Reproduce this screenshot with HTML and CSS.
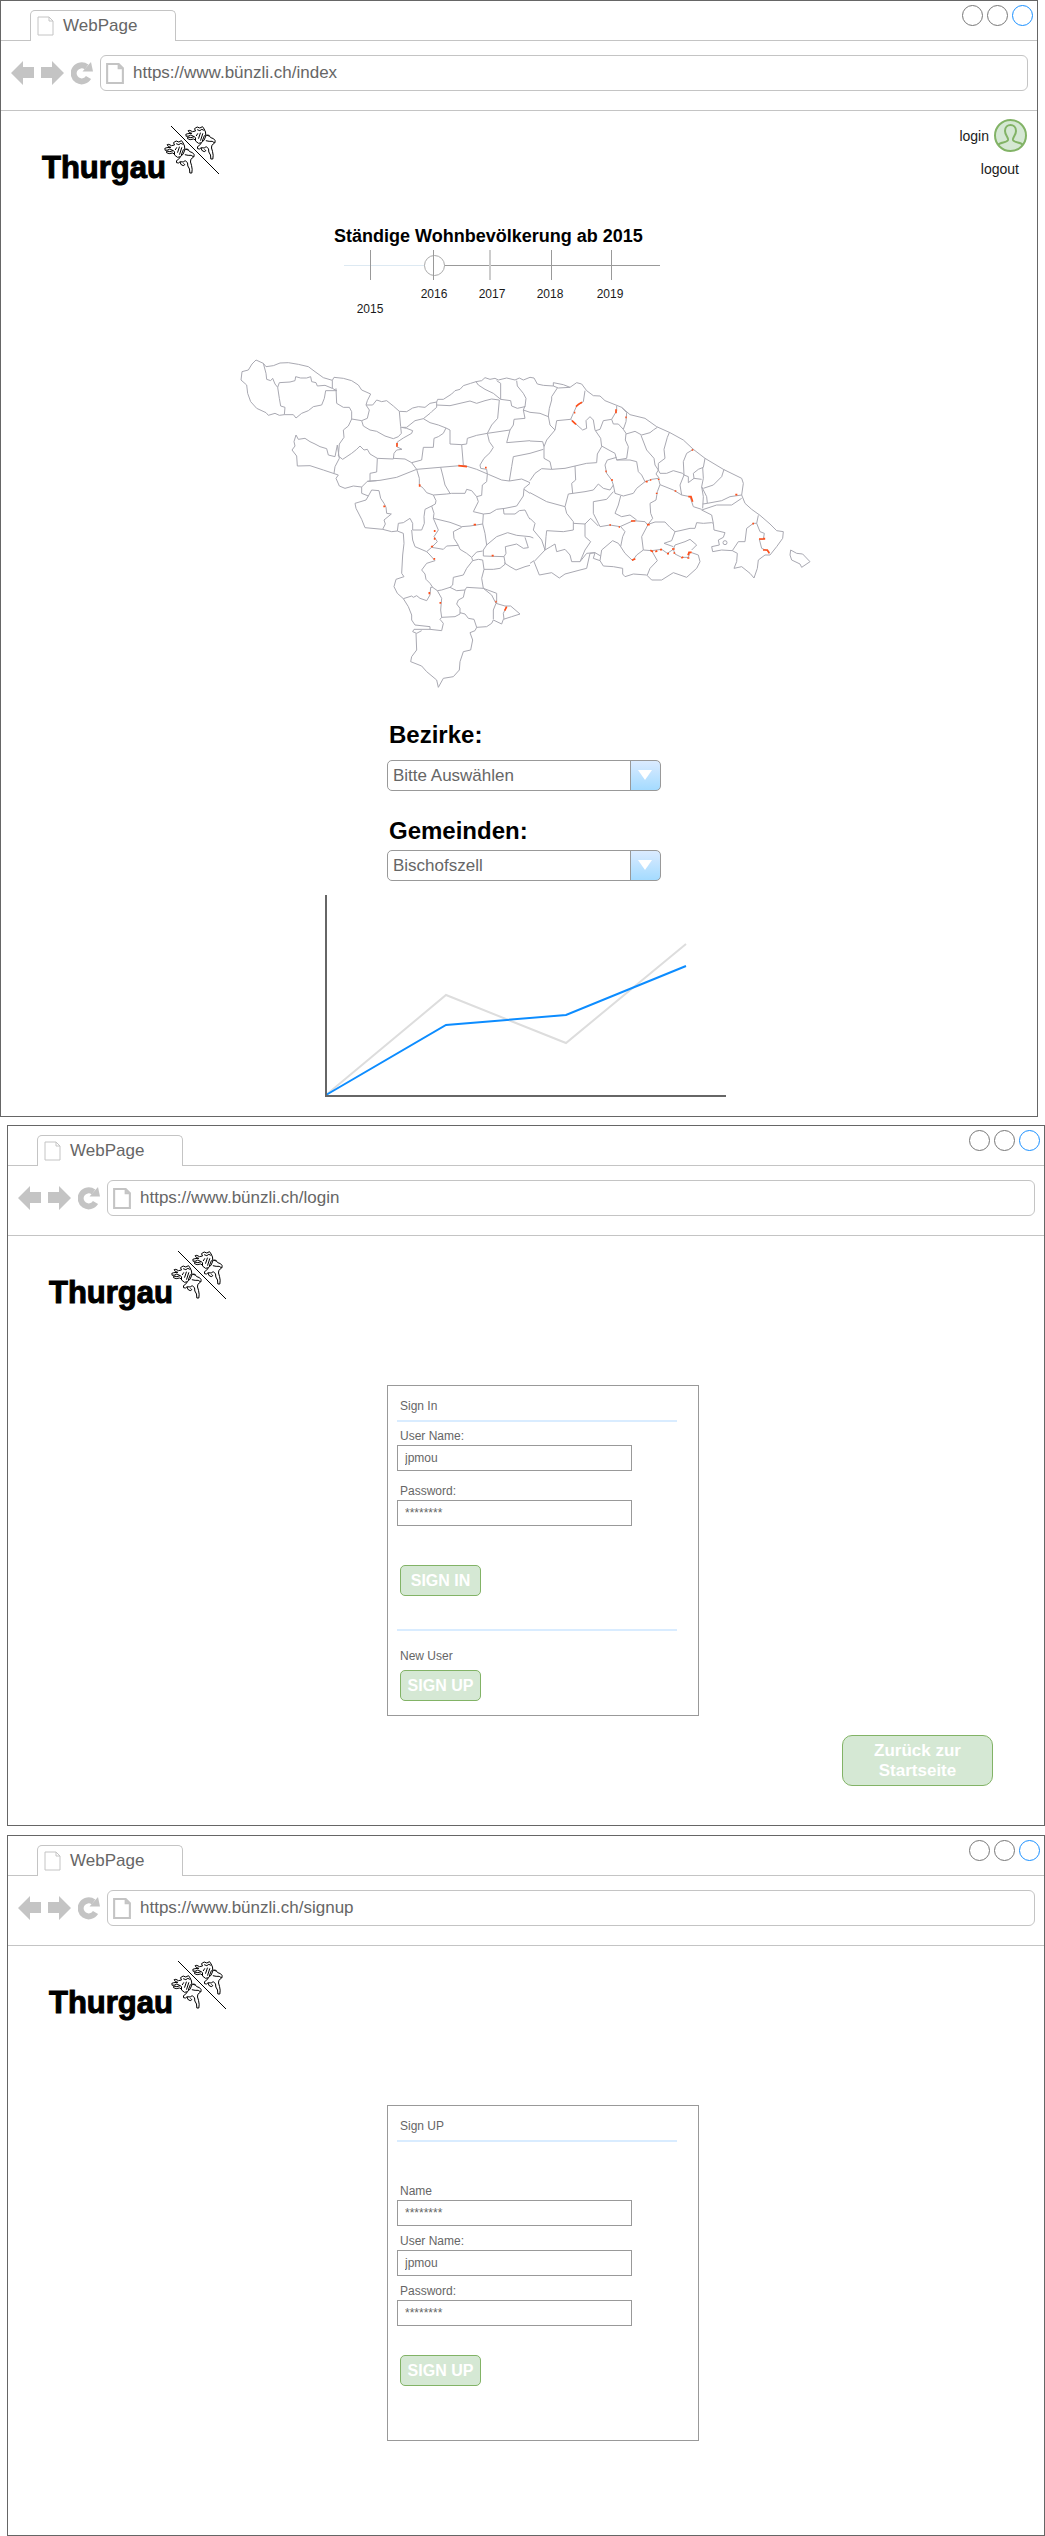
FILE: index.html
```html
<!DOCTYPE html>
<html lang="de">
<head>
<meta charset="utf-8">
<meta name="viewport" content="width=device-width, initial-scale=1">
<title>Thurgau</title>
<link rel="stylesheet" href="styles.css">
</head>
<body>

<!-- Shared icons -->
<svg class="sprite" aria-hidden="true">
  <symbol id="i-page" viewBox="0 0 17 20">
    <path d="M1 1H12L16 5V19H1ZM12 1V5H16" fill="none" stroke="currentColor"/>
  </symbol>
  <symbol id="i-back" viewBox="0 0 23 26">
    <path d="M0 13L12 1V7H23V18H12V25Z" fill="currentColor"/>
  </symbol>
  <symbol id="i-forward" viewBox="0 0 23 26">
    <path d="M23 13L11 1V7H0V18H11V25Z" fill="currentColor"/>
  </symbol>
  <symbol id="i-reload" viewBox="0 0 22 26">
    <path d="M17.5 17.5A8 8 0 1 1 15.5 7" fill="none" stroke="currentColor" stroke-width="6"/>
    <path d="M11.500 11.500L20 2L22 11.500Z" fill="currentColor"/>
  </symbol>
  <symbol id="i-lion" viewBox="0 0 92 102" overflow="visible">
    <path d="M28 8L36 3L44 6L52 2L57 9L61 18L62 30L57 42L49 50L40 52L31 45L31 35L27 32
      M28 8L31 15L22 17L14 13L9 14L13 20L20 22L8 23L2 25L3 31L11 30L17 27L27 32L17 35L8 33L7 38L15 41L25 39L31 42
      M36 11L44 14L50 10L56 13M38 22L33 30M46 20L40 38M53 22L46 44M58 28L51 46
      M62 28L70 27L74 31M62 44L72 46L81 46L89 51L90 44L85 38L77 35L72 30L66 28
      M49 50L43 58L37 62L37 68L43 69L48 65L57 66L63 62L70 68L71 78L76 87L77 99L83 99L84 88L82 76L79 66L80 58L88 51
      M48 66L50 73L57 77L62 74L58 70"/>
  </symbol>
  <symbol id="i-logo" viewBox="0 0 55 52" overflow="visible">
    <g fill="none" stroke="#000">
      <path d="M5 3L53 51"/>
      <use href="#i-lion" x="-2" y="17" width="31" height="34" stroke-width="3"/>
      <use href="#i-lion" x="19" y="3" width="31" height="34" stroke-width="3"/>
    </g>
  </symbol>
</svg>

<section class="window window-index">
  <header class="tabbar">
    <div class="tab"><svg class="tab-icon"><use href="#i-page"/></svg>WebPage</div>
    <div class="controls"><i></i><i></i><i class="active"></i></div>
  </header>
  <div class="toolbar">
    <svg class="nav-icon"><use href="#i-back"/></svg>
    <svg class="nav-icon"><use href="#i-forward"/></svg>
    <svg class="nav-icon reload"><use href="#i-reload"/></svg>
    <div class="address"><svg class="address-icon"><use href="#i-page"/></svg><input type="text" aria-label="Adresse" value="https://www.bünzli.ch/index"></div>
  </div>
  <div class="site-head">
    <div class="logo"><span>Thurgau</span><svg><use href="#i-logo"/></svg></div>
    <nav class="account">
      <a class="login" href="#login">login
        <svg viewBox="0 0 33 33" fill="none" stroke="#82b366" stroke-width="2">
          <circle cx="16.500" cy="16.500" r="15.500" fill="#d5e8d4"/>
          <path d="M4 26C6 23 13 24 14 21C14.500 18 11 16 11 12C11 4 22 4 22 12C22 16 18.500 18 19 21C20 24 27 23 29 26"/>
        </svg>
      </a>
      <a class="logout" href="#logout">logout</a>
    </nav>
  </div>

  <main class="stage">
    <div class="timeline">
      <h1><label for="year">Ständige Wohnbevölkerung ab 2015</label></h1>
      <div class="slider">
        <input id="year" type="range" min="0" max="100" value="27" aria-valuetext="2016">
        <svg viewBox="0 0 318 70">
          <path d="M26.500 0V30M89.500 0V30M207.500 0V30M267.500 0V30" stroke="#999"/>
          <path d="M146 0V30" stroke="#ccc" stroke-width="2"/>
          <g text-anchor="middle">
            <text x="26" y="63">2015</text>
            <text x="90" y="48">2016</text>
            <text x="148" y="48">2017</text>
            <text x="206" y="48">2018</text>
            <text x="266" y="48">2019</text>
          </g>
        </svg>
      </div>
    </div>

    <svg class="map" viewBox="0 0 1800 1050" role="img" aria-label="Gemeinden im Kanton Thurgau">
      <g class="borders">
        <path d="M78 30L66 42 55 60 36 65 33 90 50 105 53 130 62 155 80 175 108 188 115 196 135 190 148 196 163 194 190 194 198 204 215 190 235 182 250 170 275 165 283 145 287 122 320 122"/>
        <path d="M78 30L100 40 108 50 130 47 150 39 175 38 205 43 235 50 255 65 280 83 307 91 307 115 320 122"/>
        <path d="M100 40L108 70 110 88 122 92 128 85 135 102 143 112 148 145 152 168 165 172 163 194M143 112L148 98 180 96 195 92 197 80 212 84 230 84 242 80 245 95 258 98 262 108 285 106 307 115"/>
        <path d="M307 91L312 82 340 85 365 92 385 105 395 120 422 132 412 152 408 165 418 180 412 205 395 212 365 207 365 185 358 172 340 172 320 160 318 115"/>
        <path d="M408 165L428 165 440 150 455 155 470 152 490 168 508 184 530 185 548 174 565 170 585 172 600 160 620 156 623 148 640 148 665 132 675 122 690 118 700 107 722 100 738 95 755 92 765 83 780 88 795 85 805 90 830 84 855 90 868 84 880 90 900 82"/>
        <path d="M395 212L400 228 420 240 440 244 465 258 490 266 505 260 514 250 512 230 508 184"/>
        <path d="M365 207L355 228 340 240 342 262 328 282 325 318 338 328 365 310 380 298 390 288 402 300 412 298 420 312 442 325 490 327 492 310 500 300 516 298 500 290 502 276 520 264 545 250 548 242 530 235 514 232"/>
        <path d="M198 255L205 268 225 265 240 275 255 282 270 290 290 296 295 315 315 320 322 285 328 325 315 350 312 370M198 255L192 275 195 288 186 300 200 318 202 348 240 347 280 360 325 375"/>
        <path d="M325 375L318 385 328 408 345 415 370 408 395 411 412 394 440 392M420 394L420 370 440 366 442 325"/>
        <path d="M412 394L450 391 500 382 560 358 630 352 690 347 705 347 740 358 775 373 815 390 838 393 875 387 900 398"/>
        <path d="M395 411L395 430 415 438 425 420 447 422 452 445 462 460 468 472 470 490 484 492 462 510 466 522 458 538"/>
        <path d="M415 438L408 450 375 460 378 475 395 508 405 533 458 538 485 545 502 543 505 520 520 518 540 505 548 520 548 540 575 540 583 520 582 500 585 478 605 468"/>
        <path d="M490 325L525 327 545 338 560 358 568 385 568 405 580 415 590 428 610 435 618 452 616 462 605 468 612 490 610 505"/>
        <path d="M545 338L575 330 580 292 610 292 612 265 625 260 640 250 648 234"/>
        <path d="M514 232L530 232 555 212 580 206 600 218 625 225 648 234 660 240 660 282 695 284 700 345M580 206L600 190 605 185 620 172 620 156"/>
        <path d="M620 165L660 167 690 160 720 153 740 160 765 152 785 147 808 150 803 205 785 225 772 250 740 256 712 265 710 282 695 284"/>
        <path d="M738 95L745 105 765 118 790 130 812 148 812 100 800 92M812 148L842 152 845 168 862 175 885 170 888 145 880 130 862 108 860 92"/>
        <path d="M772 250L840 240 850 225 852 208 885 205 880 180 885 168M880 180L900 187M840 240L830 278 900 272M900 310L850 320 845 350 838 393"/>
        <path d="M772 250L778 275 790 292 780 308 762 325 750 345 752 355 770 358 772 373"/>
        <path d="M632 352L638 375 645 405 660 430M610 435L650 432 665 430 705 430 710 418 725 422 740 440 755 436 757 405 770 395 772 373"/>
        <path d="M740 440L745 455 730 485 760 492M900 400L882 415 880 438 860 468 825 475 800 478 780 490 760 492 758 522 720 528 695 530 660 517 610 505M882 418L900 430M820 475L822 492 855 492 868 482 885 480 895 500 900 508"/>
        <path d="M610 505L625 540 612 560 622 575 605 592 590 605 555 590 548 570 545 540M605 592L640 598 650 588 685 586 672 565 670 545 695 532M685 586L690 598 710 610 725 622 740 606 758 603"/>
        <path d="M758 522L765 550 770 585 760 600 760 618 822 620 826 642 810 655 790 658 762 658M770 585L800 560 833 548 860 556 900 560M822 620L828 610 826 590 860 582 880 595 895 593 885 562M822 638L840 650 858 660 885 650 900 646"/>
        <path d="M502 543L520 550 522 580 518 615 515 670 522 680 498 688 492 710 502 730 520 746 545 738 550 742 560 737 570 745 590 752 600 735 602 712 608 712 600 700 588 688 585 672 575 660 590 640 615 632 600 615 590 605"/>
        <path d="M725 622L728 632 745 628 758 630 762 658 755 685 760 715M728 632L710 655 700 675 670 682 668 705 660 712 635 720 622 722 608 712M660 712L680 722 705 720 710 712 760 715 800 730 800 760"/>
        <path d="M760 715L785 735 795 755 798 760 825 768 842 768 870 792 845 800 820 808 815 822 790 810 785 820 770 830 740 832M798 760L790 780 790 808M830 770L820 790 822 808"/>
        <path d="M705 720L700 742 685 750 680 762 690 775 690 792 675 800 635 802 632 780 635 745 622 722"/>
        <path d="M690 788L705 792 715 805 732 808 740 832 735 842 720 848 728 870 722 900 700 905 690 935 688 960 670 980 640 985 625 1012 620 990 590 965 575 948 542 935 545 920 560 900 558 850M520 746L535 770 545 795 545 810 555 825 600 830 600 838 635 842 640 820 630 808 635 802M600 838L552 838 548 845 560 850 575 842"/>
      </g>
      <g class="borders" transform="translate(900 0)">
        <path d="M0 82L12 84 22 102 40 106 70 108 70 98 100 104 120 112 140 98 155 102 170 122 190 137 210 138 225 152 255 164 275 172 300 194 345 205 380 230 420 248 460 270 490 298 525 325 580 358 635 385 640 400 635 435 645 460 665 478 690 496 720 522 740 542 760 545 758 565 740 590 720 615M70 108L85 114 120 112"/>
        <path d="M82 114L65 140 65 150 58 175 55 198 60 225 75 240 80 212 122 208 130 190 140 168 160 155 165 122M0 187L30 190 55 200"/>
        <path d="M75 240L50 270 42 290 42 325 60 335 65 358 105 355 135 348 170 340 200 338 202 312 215 290 212 265 195 240 190 210 180 200 168 212 170 235 158 240 122 208M0 273L38 275 42 290M0 310L40 298M65 358L35 356 15 370 0 392"/>
        <path d="M197 242L210 238 220 212 245 208 260 182 260 168M245 208L250 222 265 222 280 238 288 250 286 270 295 290 290 325 260 330 255 310 240 302 215 288"/>
        <path d="M275 172L290 188 288 215 280 238M288 252L315 244 335 255 360 248 370 240 382 232M333 256L350 300 372 325 375 345 385 360 385 340 405 325 402 298 412 262 418 248"/>
        <path d="M260 330L300 330 320 335 325 365 335 375 345 395 365 388 385 385 390 404M260 322L232 330 225 345 230 370 245 390 250 405 240 420 220 415 205 402 190 420 165 425 115 432 105 470M135 348L137 390 125 400 128 430"/>
        <path d="M0 428L50 455 105 470 110 490 130 515 130 540 100 545 50 542 48 560 45 600 62 590 75 582 80 605 105 598 120 615 125 635 150 635 170 610 195 608"/>
        <path d="M385 360L390 370 410 370 430 362 458 370 462 375 450 405 455 435 480 440 490 470 515 478M390 404L430 420 455 435M385 360L378 372 388 385M345 395L320 415 310 430 280 438 255 430 250 405"/>
        <path d="M250 425L230 448 190 455 190 490 205 520 210 530 240 525 270 530 310 512 345 515 352 524 375 516 405 516 420 532 435 545 450 542 480 535 495 535 500 518 520 520 545 518 550 520 545 495 515 480"/>
        <path d="M272 438L265 465 255 490 275 500 300 495 320 510M390 404L382 425 378 450 360 460 362 490 368 505 355 522 335 560 340 600 320 615 308 632 285 610 272 590 278 560 285 545 272 530"/>
        <path d="M130 520L165 522 182 505 205 528M165 522L165 560 182 575 165 600 150 635M195 608L190 625 210 632 215 600 248 572 265 580 272 590M180 610L195 608 212 618"/>
        <path d="M210 632L220 648 250 650 278 655 278 672 285 680 310 672 350 675 365 690 395 690 430 668 470 682 500 655 510 635 505 615 485 608M45 600L12 635 28 675 65 668 88 684 105 672 150 660 170 655 180 610"/>
        <path d="M340 600L365 602 395 598 412 610 430 598 435 612 455 622 475 622 480 608M365 602L382 632 360 655 352 675M430 598L435 585 465 575 480 568 500 585 485 600M430 590L402 580 425 572 435 545"/>
        <path d="M490 298L470 310 460 335 462 375 475 380 475 398 492 385 515 388M492 385L490 370 505 358 520 352 525 325M518 352L520 385 515 410 530 440 532 460M520 415L550 405 575 380 582 358M515 410L520 440 518 475M515 480L560 465 605 465 635 445M518 462L532 460 575 452 600 440 635 435"/>
        <path d="M550 520L552 540 585 548 580 562 565 570 568 585 545 590 548 605 575 600 607 602 625 575 645 575 650 535 670 520 680 520 685 496M607 602L622 610 620 635 612 655 635 650 660 670 672 684 682 655 685 630 705 615 720 615M680 520L690 545 703 550 700 568 688 568 695 595 718 605"/>
        <circle cx="585" cy="578" r="6"/>
        <path d="M782 600L800 610 818 612 840 635 815 652 810 642 785 630 780 615Z"/>
        <path d="M0 505L15 520 10 540 35 570 45 600M0 560L10 564M0 640L12 632"/>
      </g>
      <g class="marks">
        <path d="M501 279V290M685 347L711 350M765 353H770M569 403V410M460 469H466M731 524H738M614 540V546M614 563V569M604 592L608 587M613 624V629M785 617H791M598 726V733M631 756V761M796 755H800M824 782L830 770"/>
        <path transform="translate(900 0)" d="M138 170L145 163 156 157M132 188H136M126 212L138 223M258 178V190M286 202H290M226 364H230M243 390H249M347 395H353M360 390H364M386 386V390M380 428V432M434 423H439M475 440H483L488 455M616 434H622M485 300H490M238 525H243M266 531H270M303 513H316M351 524H359M306 631L316 626M361 601L369 605M376 605L382 602M390 599H396M411 611H417M426 597H434M433 607V611M454 624L460 621M472 624H478M474 616L477 607H485M667 521H672M687 567H703V563M699 600H712L718 610"/>
      </g>
    </svg>

    <div class="filters">
      <label for="bezirk">Bezirke:</label>
      <div class="select">
        <select id="bezirk"><option>Bitte Auswählen</option></select>
        <svg viewBox="0 0 14 10"><path d="M0 0H14L7 10Z" fill="#fff"/></svg>
      </div>
      <label for="gemeinde">Gemeinden:</label>
      <div class="select">
        <select id="gemeinde"><option>Bischofszell</option></select>
        <svg viewBox="0 0 14 10"><path d="M0 0H14L7 10Z" fill="#fff"/></svg>
      </div>
    </div>

    <svg class="chart" viewBox="0 0 402 202" role="img" aria-label="Bevölkerungsverlauf" fill="none" stroke-width="2">
      <path d="M1 200L121 100L241 148L361 49" stroke="#ddd"/>
      <path d="M1 200L121 130L241 120L361 71" stroke="#0c8cff"/>
      <path d="M1 0V201H401" stroke="#666"/>
    </svg>
  </main>
</section>

<section class="window window-login">
  <header class="tabbar">
    <div class="tab"><svg class="tab-icon"><use href="#i-page"/></svg>WebPage</div>
    <div class="controls"><i></i><i></i><i class="active"></i></div>
  </header>
  <div class="toolbar">
    <svg class="nav-icon"><use href="#i-back"/></svg>
    <svg class="nav-icon"><use href="#i-forward"/></svg>
    <svg class="nav-icon reload"><use href="#i-reload"/></svg>
    <div class="address"><svg class="address-icon"><use href="#i-page"/></svg><input type="text" aria-label="Adresse" value="https://www.bünzli.ch/login"></div>
  </div>
  <div class="site-head">
    <div class="logo"><span>Thurgau</span><svg><use href="#i-logo"/></svg></div>
  </div>
  <main class="form-area">
    <form class="card signin">
      <h2>Sign In</h2>
      <hr>
      <div class="fields">
        <div class="field"><label for="in-user">User Name:</label><input id="in-user" type="text" value="jpmou"></div>
        <div class="field"><label for="in-pass">Password:</label><input id="in-pass" type="password" placeholder="********"></div>
      </div>
      <button type="button">SIGN IN</button>
      <hr class="divider">
      <p>New User</p>
      <button class="register" type="button">SIGN UP</button>
    </form>
    <button class="home" type="button">Zurück zur<br>Startseite</button>
  </main>
</section>

<section class="window window-signup">
  <header class="tabbar">
    <div class="tab"><svg class="tab-icon"><use href="#i-page"/></svg>WebPage</div>
    <div class="controls"><i></i><i></i><i class="active"></i></div>
  </header>
  <div class="toolbar">
    <svg class="nav-icon"><use href="#i-back"/></svg>
    <svg class="nav-icon"><use href="#i-forward"/></svg>
    <svg class="nav-icon reload"><use href="#i-reload"/></svg>
    <div class="address"><svg class="address-icon"><use href="#i-page"/></svg><input type="text" aria-label="Adresse" value="https://www.bünzli.ch/signup"></div>
  </div>
  <div class="site-head">
    <div class="logo"><span>Thurgau</span><svg><use href="#i-logo"/></svg></div>
  </div>
  <main class="form-area">
    <form class="card signup">
      <h2>Sign UP</h2>
      <hr>
      <div class="fields">
        <div class="field"><label for="up-name">Name</label><input id="up-name" type="text" placeholder="********"></div>
        <div class="field"><label for="up-user">User Name:</label><input id="up-user" type="text" value="jpmou"></div>
        <div class="field"><label for="up-pass">Password:</label><input id="up-pass" type="password" placeholder="********"></div>
      </div>
      <button type="button">SIGN UP</button>
    </form>
  </main>
</section>

</body>
</html>
```
FILE: styles.css
```css
* { box-sizing: border-box; }

body {
  margin: 0;
  background: #fff;
  color: #666;
  font: 17px/20px "Liberation Sans", Arial, sans-serif;
}

svg { display: block; flex: none; }
h1, h2, p { margin: 0; }
input, select, button { font: inherit; color: inherit; margin: 0; }
a { color: #1a1a1a; text-decoration: none; }
.sprite { position: absolute; width: 0; height: 0; }

/* Browser windows */
.window { border: 1px solid #666; background: #fff; }
.window-index { margin: 0 7px 8px 0; }
.window-login { margin: 0 0 9px 7px; }
.window-signup { margin-left: 7px; }

.tabbar {
  display: flex;
  justify-content: space-between;
  height: 40px;
  padding: 0 4px 0 29px;
  border-bottom: 1px solid #c4c4c4;
}
.tab {
  display: flex;
  align-items: center;
  gap: 9px;
  width: 146px;
  height: 31px;
  margin-top: 9px;
  padding-left: 6px;
  border: 1px solid #c4c4c4;
  border-bottom: 0;
  border-radius: 5px 5px 0 0;
  background: #fff;
}
.tab-icon { width: 17px; height: 20px; color: #c4c4c4; }
.controls { display: flex; gap: 4px; padding-top: 4px; }
.controls i { width: 21px; height: 21px; border: 1px solid #777; border-radius: 50%; }
.controls .active { border-color: #1a90ff; }

.toolbar {
  display: flex;
  align-items: center;
  gap: 7px;
  padding: 14px 9px 19px 10px;
  border-bottom: 1px solid #c4c4c4;
}
.nav-icon { width: 23px; height: 26px; color: #c4c4c4; }
.reload { width: 22px; }
.address {
  display: flex;
  flex: 1;
  align-items: center;
  gap: 9px;
  height: 36px;
  padding: 0 5px;
  border: 1px solid #c4c4c4;
  border-radius: 6px;
}
.address input { flex: 1; min-width: 0; padding: 0; border: 0; background: none; outline: 0; }
.address-icon { width: 18px; height: 21px; color: #c4c4c4; stroke-width: 2; }

/* Site header */
.site-head { display: flex; justify-content: space-between; height: 73px; padding: 8px 10px 0 41px; }
.logo { display: flex; padding-top: 4px; }
.logo span {
  padding-top: 29px;
  color: #000;
  font-size: 31px;
  font-weight: 700;
  line-height: 32px;
  -webkit-text-stroke: 1px #000;
}
.logo svg { width: 55px; height: 52px; overflow: visible; }
.account { display: flex; flex-direction: column; gap: 7px; align-items: flex-end; font-size: 14px; }
.login { display: flex; align-items: center; gap: 5px; }
.login svg { width: 33px; height: 33px; }
.logout { padding-right: 8px; }

/* Index page */
.stage { width: 100%; max-width: 622px; margin: 0 auto; padding: 40px 0 19px 22px; }
.timeline { width: 328px; margin-left: 104px; }
.timeline h1 { color: #000; font-size: 18px; line-height: 24px; white-space: nowrap; }
.slider { display: grid; margin: 2px 0 30px 10px; }
.slider > * { grid-area: 1 / 1; }
.slider svg { width: 318px; height: 70px; pointer-events: none; font-size: 12px; fill: #1a1a1a; z-index: 1; }
.slider input {
  -webkit-appearance: none;
  appearance: none;
  width: 316px;
  height: 30px;
  background: linear-gradient(90deg, #dde9f2 90px, #999 90px) center / 100% 1px no-repeat;
}
.slider input::-webkit-slider-thumb {
  -webkit-appearance: none;
  width: 21px;
  height: 21px;
  border: 1px solid #aaa;
  border-radius: 50%;
  background: #fff;
}
.map { width: 100%; max-width: 600px; height: auto; }
.borders { fill: none; stroke: #a9a9b2; stroke-width: 3; stroke-linejoin: round; }
.marks { fill: none; stroke: #ff4f1a; stroke-width: 5; }

.filters { display: flex; flex-direction: column; width: 274px; margin: 21px 0 14px 157px; }
.filters label { padding-left: 2px; color: #000; font-size: 24px; font-weight: 700; line-height: 28px; }
.select { position: relative; margin: 11px 0 26px; }
.select ~ .select { margin: 5px 0 0; }
.select select {
  -webkit-appearance: none;
  appearance: none;
  display: block;
  width: 100%;
  height: 31px;
  padding: 0 36px 0 5px;
  border: 1px solid #999;
  border-radius: 5px;
  background: linear-gradient(#dbebff, #a4dbff) right / 29px 100% no-repeat,
              linear-gradient(#999, #999) right / 30px 100% no-repeat, #fff;
}
.select svg { position: absolute; top: 10px; right: 9px; width: 14px; height: 10px; pointer-events: none; }
.chart { width: 402px; height: 202px; margin-left: 95px; }

/* Sign-in and sign-up pages */
.form-area { display: flex; flex-direction: column; align-items: center; }
.window-login .form-area { padding: 76px 0 39px; }
.window-signup .form-area { padding: 86px 0 94px; }
.card {
  width: 312px;
  margin-left: 34px;
  padding: 12px 9px 14px;
  border: 1px solid #999;
  font-size: 12px;
  line-height: 16px;
}
.card h2 { padding-left: 3px; font-size: 12px; font-weight: 400; }
.card p { padding-left: 3px; }
.card hr { width: 280px; height: 2px; margin: 6px 0; border: 0; background: #d9ecff; }
.card .divider { margin: 33px 0 17px; }
.fields { display: flex; flex-direction: column; gap: 12px; }
.field { display: flex; flex-direction: column; gap: 1px; width: 235px; }
.field label { padding-left: 3px; }
.field input { height: 26px; padding: 0 7px; border: 1px solid #999; background: #fff; }
.field input::placeholder { color: #666; opacity: 1; }
.signup { padding-bottom: 54px; }
.signup .fields { gap: 7px; margin-top: 41px; }

button { border: 1px solid #82b366; background: #d5e8d4; color: #fff; font-weight: 700; }
.card button {
  display: block;
  width: 81px;
  height: 31px;
  margin: 39px 0 0 3px;
  padding: 0;
  border-radius: 5px;
  font-size: 16px;
}
.card .register { margin-top: 6px; }
.signup button { margin-top: 29px; }
.home {
  align-self: flex-end;
  width: 151px;
  margin: 19px 51px 0 0;
  padding: 5px 0 4px;
  border-radius: 10px;
  line-height: 20px;
}
```
